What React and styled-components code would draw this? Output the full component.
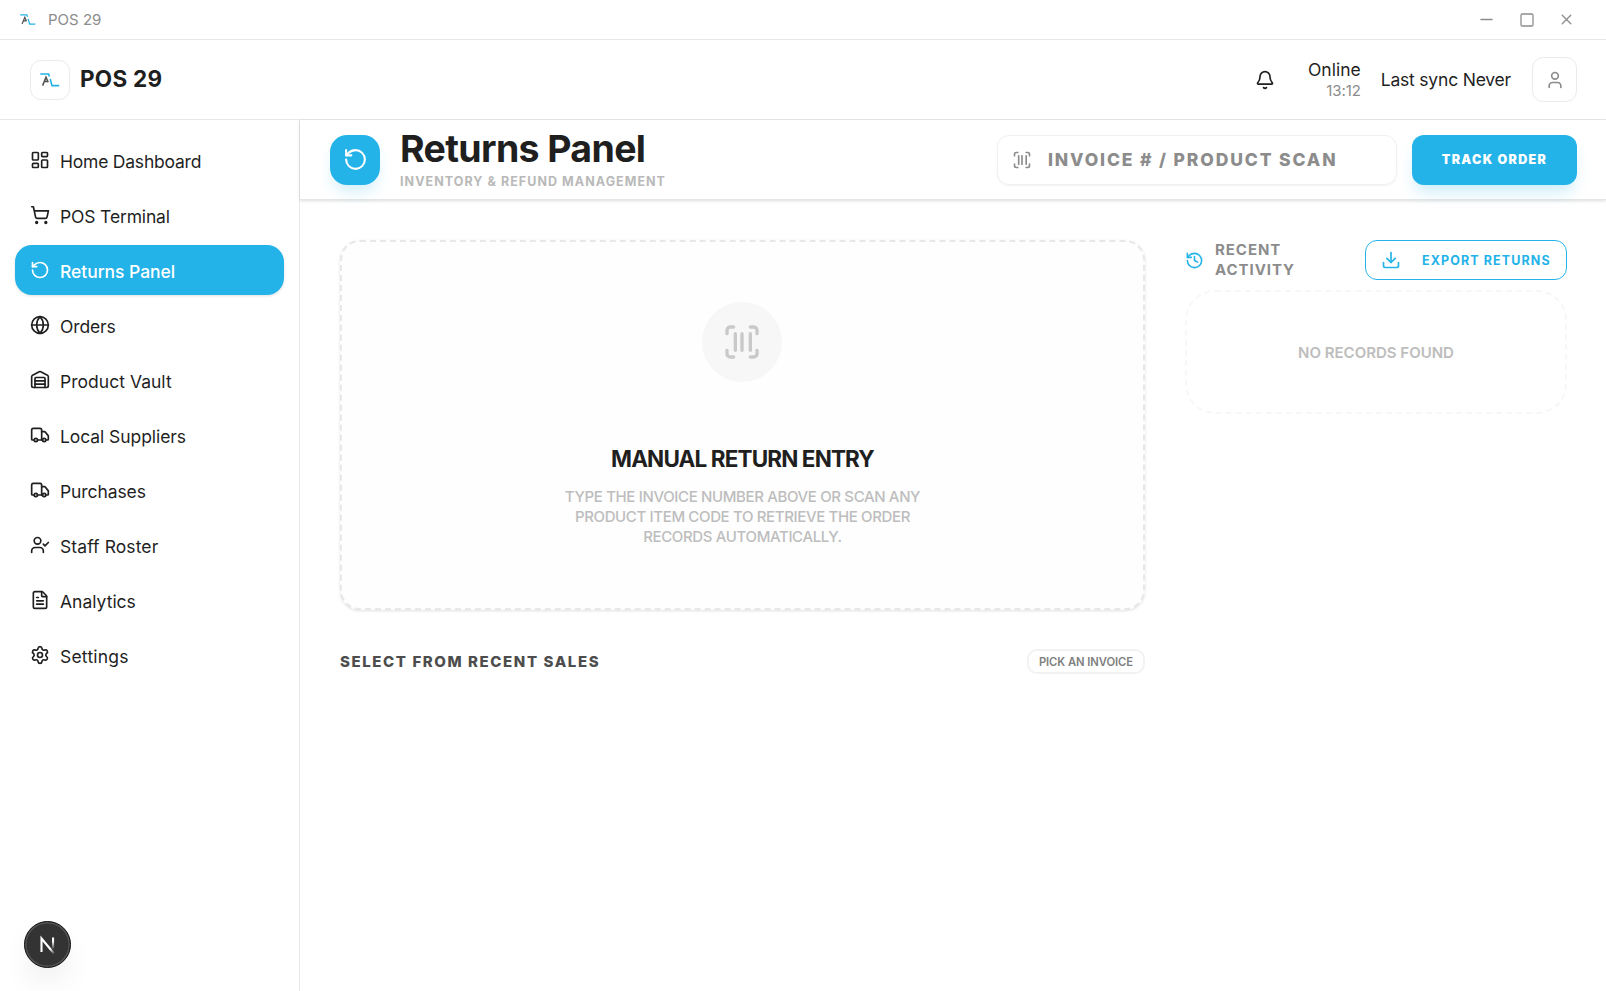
import styled, { createGlobalStyle } from 'styled-components';
import {
  Bell,
  Download,
  FileText,
  Globe,
  History,
  LayoutDashboard,
  Minus,
  RotateCcw,
  ScanBarcode,
  Settings,
  ShoppingCart,
  Square,
  Truck,
  User,
  UserCheck,
  Warehouse,
  X,
} from 'lucide-react';

const GlobalStyle = createGlobalStyle`
  * {
    box-sizing: border-box;
  }
  body {
    margin: 0;
    background: #fff;
    color: #1f1f1f;
    font-family: Inter, 'Liberation Sans', sans-serif;
    overflow: hidden;
  }
  h1, h2, h3, p {
    margin: 0;
  }
  svg {
    display: block;
    flex-shrink: 0;
  }
`;
const Window = styled.div`
  display: flex;
  flex-direction: column;
  height: 100vh;
`;
const TitleBar = styled.div`
  display: flex;
  align-items: center;
  flex: 0 0 40px;
  padding: 0 31px 0 20px;
  border-bottom: 1px solid #e8e8e8;
  color: #8c8c8c;
`;
const WindowTitle = styled.span`
  margin-left: 12px;
  font-size: 15px;
`;
const WindowButtons = styled.div`
  display: flex;
  align-items: center;
  gap: 23px;
  margin-left: auto;
`;
const Header = styled.header`
  display: flex;
  align-items: center;
  flex: 0 0 80px;
  padding: 0 29px 0 30px;
  border-bottom: 1px solid #e8e8e8;
`;
const IconBox = styled.div`
  display: flex;
  justify-content: center;
  align-items: center;
  width: ${props => props.$size}px;
  height: ${props => props.$size}px;
  border: 1px solid #ebebeb;
  border-radius: 11px;
  color: #8c8c8c;
`;
const Brand = styled.h2`
  margin-left: 10px;
  padding-bottom: 2px;
  font-size: 22.5px;
  font-weight: 700;
  letter-spacing: 0.25px;
`;
const HeaderRight = styled.div`
  display: flex;
  align-items: center;
  margin-left: auto;
`;
const Status = styled.div`
  margin: 0 20px 0 33px;
  text-align: right;
  font-size: 17.5px;
  line-height: 22px;
  p {
    color: #8c8c8c;
    font-size: 15px;
    line-height: 20px;
    letter-spacing: -0.1px;
  }
`;
const Sync = styled.span`
  margin-right: 21px;
  font-size: 17.5px;
  letter-spacing: -0.2px;
`;
const Body = styled.div`
  display: flex;
  flex: 1;
  min-height: 0;
`;
const Sidebar = styled.nav`
  display: flex;
  flex-direction: column;
  gap: 5px;
  flex: 0 0 300px;
  padding: 15px 15px 23px;
  border-right: 1px solid #e8e8e8;
`;
const NavItem = styled.div`
  display: flex;
  align-items: center;
  gap: 10px;
  height: 50px;
  padding: 0 15px;
  border-radius: 17px;
  font-size: 17.5px;
  letter-spacing: ${props => props.$spacing || 0}px;
  color: ${props => (props.$active ? '#fff' : '#1f1f1f')};
  background: ${props => (props.$active ? '#24b3e8' : 'transparent')};
  box-shadow: ${props =>
    props.$active ? '0 1px 3px rgba(0, 0, 0, 0.12)' : 'none'};
  font-weight: ${props => (props.$active ? 500 : 400)};
  span {
    padding-top: 2px;
  }
`;
const DevBadge = styled.div`
  display: flex;
  justify-content: center;
  align-items: center;
  width: 47px;
  height: 47px;
  margin: auto 0 0 9px;
  border: 1px solid #111;
  border-radius: 50%;
  background: #333;
  box-shadow:
    inset 0 0 0 1.5px #545454,
    0 16px 32px -8px rgba(0, 0, 0, 0.12);
`;
const Main = styled.main`
  flex: 1;
  min-width: 0;
`;
const PageHeader = styled.div`
  display: flex;
  align-items: center;
  height: 80px;
  padding: 0 29px 0 30px;
  border-bottom: 1px solid #e5e5e5;
  box-shadow: 0 1px 3px rgba(0, 0, 0, 0.14);
`;
const PageIcon = styled.div`
  display: flex;
  justify-content: center;
  align-items: center;
  width: 50px;
  height: 50px;
  border-radius: 17px;
  color: #fff;
  background: #24b3e8;
  box-shadow: 0 10px 16px -4px rgba(36, 179, 232, 0.22);
`;
const PageTitle = styled.div`
  margin-left: 20px;
  padding-top: 1px;
  h1 {
    font-size: 37.5px;
    line-height: 38px;
    font-weight: 700;
    letter-spacing: -0.65px;
  }
  p {
    margin-top: 5px;
    color: #b9b9b9;
    font-size: 12.5px;
    line-height: 18px;
    font-weight: 700;
    letter-spacing: 1.05px;
  }
`;
const SearchBox = styled.div`
  display: flex;
  align-items: center;
  gap: 16px;
  width: 400px;
  height: 50px;
  margin-left: auto;
  padding: 0 14px;
  border: 1px solid #f0f0f0;
  border-radius: 12px;
  box-shadow: 0 1px 2px rgba(0, 0, 0, 0.05);
  color: #8c8c8c;
  font-size: 17.5px;
  font-weight: 800;
  letter-spacing: 1.86px;
  white-space: nowrap;
`;
const TrackButton = styled.button`
  width: 165px;
  height: 50px;
  margin-left: 15px;
  padding: 0;
  border: 0;
  border-radius: 12px;
  background: #24b3e8;
  box-shadow: 0 10px 16px -4px rgba(36, 179, 232, 0.25);
  color: #fff;
  font-family: inherit;
  font-size: 12.5px;
  font-weight: 900;
  letter-spacing: 1.35px;
`;
const Content = styled.div`
  display: grid;
  grid-template-columns: 805px 382px;
  gap: 40px;
  padding: 40px;
`;
const EntryCard = styled.section`
  display: flex;
  flex-direction: column;
  align-items: center;
  height: 370px;
  padding-top: 60px;
  border: 2px dashed #e8e8e8;
  border-radius: 20px;
  background: #fefefe;
  box-shadow: 0 1px 3px rgba(0, 0, 0, 0.12);
  h3 {
    margin-top: 62px;
    font-size: 22.5px;
    line-height: 30px;
    font-weight: 700;
    letter-spacing: -0.87px;
  }
  p {
    width: 400px;
    margin-top: 13px;
    text-align: center;
    color: #bdbdbd;
    font-size: 15px;
    line-height: 20px;
    font-weight: 500;
    letter-spacing: -0.36px;
  }
`;
const Circle = styled.div`
  display: flex;
  justify-content: center;
  align-items: center;
  width: 80px;
  height: 80px;
  margin-right: 1px;
  border-radius: 50%;
  background: #f7f7f7;
  color: #c9c9c9;
`;
const SalesRow = styled.div`
  display: flex;
  align-items: center;
  justify-content: space-between;
  margin-top: 39px;
  color: #4d4d4d;
  font-size: 15px;
  font-weight: 800;
  letter-spacing: 1.59px;
`;
const Pill = styled.span`
  display: flex;
  justify-content: center;
  align-items: center;
  width: 118px;
  height: 25px;
  border: 2px solid #f2f2f2;
  border-radius: 10px;
  color: #808080;
  font-size: 11.25px;
  font-weight: 600;
  letter-spacing: -0.07px;
`;
const ActivityHead = styled.div`
  display: flex;
  align-items: center;
  height: 40px;
  svg {
    color: #24b3e8;
  }
  h3 {
    width: 110px;
    margin-left: 11px;
    color: #8c8c8c;
    font-size: 15px;
    line-height: 20px;
    font-weight: 700;
    letter-spacing: ${props => props.$spacing}px;
  }
`;
const ExportButton = styled.button`
  display: flex;
  align-items: center;
  gap: 21px;
  width: 202px;
  height: 40px;
  margin-left: auto;
  padding: 0 0 0 15px;
  border: 1px solid #24b3e8;
  border-radius: 12px;
  background: #fff;
  color: #24b3e8;
  font-family: inherit;
  font-size: 12.5px;
  font-weight: 700;
  letter-spacing: 1.1px;
  white-space: nowrap;
`;
const EmptyBox = styled.div`
  display: flex;
  justify-content: center;
  align-items: center;
  height: 124px;
  margin-top: 10px;
  border: 2px dashed #f7f7f7;
  border-radius: 30px;
  color: #bdbdbd;
  font-size: 15px;
  font-weight: 600;
`;

const navItems = [
  { label: 'Home Dashboard', icon: LayoutDashboard, spacing: -0.22 },
  { label: 'POS Terminal', icon: ShoppingCart, spacing: -0.15 },
  { label: 'Returns Panel', icon: RotateCcw, active: true, spacing: -0.05 },
  { label: 'Orders', icon: Globe, spacing: -0.15 },
  { label: 'Product Vault', icon: Warehouse, spacing: 0.03 },
  { label: 'Local Suppliers', icon: Truck, spacing: -0.07 },
  { label: 'Purchases', icon: Truck, spacing: -0.1 },
  { label: 'Staff Roster', icon: UserCheck, spacing: 0.1 },
  { label: 'Analytics', icon: FileText },
  { label: 'Settings', icon: Settings, spacing: 0.22 },
];

function Logo({ width }) {
  return (
    <svg width={width} height={width * 0.7} viewBox="0 0 20 14" fill="none">
      <path d="M0.3 1H8.6L9.4 3.6M10.2 6L12 12.6H19.2" stroke="#24b3e8" strokeWidth="1.6" />
      <path d="M2.6 12.6L6 4.2L8.2 9.2M4.6 8.6H8" stroke="#505050" strokeWidth="1.5" />
    </svg>
  );
}

function App() {
  return (
    <>
      <GlobalStyle />
      <Window>
        <TitleBar>
          <Logo width={16} />
          <WindowTitle>POS 29</WindowTitle>
          <WindowButtons>
            <Minus size={19} strokeWidth={1.8} />
            <Square size={16} strokeWidth={1.9} />
            <X size={17} strokeWidth={1.9} />
          </WindowButtons>
        </TitleBar>
        <Header>
          <IconBox $size={40}>
            <Logo width={20} />
          </IconBox>
          <Brand>POS 29</Brand>
          <HeaderRight>
            <Bell size={20} />
            <Status>
              Online
              <p>13:12</p>
            </Status>
            <Sync>Last sync Never</Sync>
            <IconBox $size={45}>
              <User size={20} />
            </IconBox>
          </HeaderRight>
        </Header>
        <Body>
          <Sidebar>
            {navItems.map(({ label, icon: Icon, active, spacing }) => (
              <NavItem key={label} $active={active} $spacing={spacing}>
                <Icon size={20} />
                <span>{label}</span>
              </NavItem>
            ))}
            <DevBadge>
              <svg width="20" height="20" viewBox="0 0 20 20" fill="none">
                <defs>
                  <linearGradient id="fade" x1="0" y1="0" x2="0" y2="1">
                    <stop offset="0.3" stopColor="#fff" />
                    <stop offset="1" stopColor="#fff" stopOpacity="0" />
                  </linearGradient>
                  <linearGradient id="tail" x1="0" y1="0" x2="1" y2="1">
                    <stop offset="0.7" stopColor="#fff" />
                    <stop offset="1" stopColor="#fff" stopOpacity="0.1" />
                  </linearGradient>
                </defs>
                <path d="M3.5 17V3.5L16 18.5" stroke="url(#tail)" strokeWidth="2.1" />
                <rect x="14" y="2.5" width="2.1" height="12" fill="url(#fade)" />
              </svg>
            </DevBadge>
          </Sidebar>
          <Main>
            <PageHeader>
              <PageIcon>
                <RotateCcw size={25} />
              </PageIcon>
              <PageTitle>
                <h1>Returns Panel</h1>
                <p>INVENTORY &amp; REFUND MANAGEMENT</p>
              </PageTitle>
              <SearchBox>
                <ScanBarcode size={20} />
                INVOICE # / PRODUCT SCAN
              </SearchBox>
              <TrackButton>TRACK ORDER</TrackButton>
            </PageHeader>
            <Content>
              <div>
                <EntryCard>
                  <Circle>
                    <ScanBarcode size={40} />
                  </Circle>
                  <h3>MANUAL RETURN ENTRY</h3>
                  <p>
                    TYPE THE INVOICE NUMBER ABOVE OR SCAN ANY
                    <br />
                    PRODUCT ITEM CODE TO RETRIEVE THE ORDER
                    <br />
                    RECORDS AUTOMATICALLY.
                  </p>
                </EntryCard>
                <SalesRow>
                  SELECT FROM RECENT SALES
                  <Pill>PICK AN INVOICE</Pill>
                </SalesRow>
              </div>
              <aside>
                <ActivityHead $spacing={0.95}>
                  <History size={19} />
                  <h3>RECENT ACTIVITY</h3>
                  <ExportButton>
                    <Download size={20} />
                    EXPORT RETURNS
                  </ExportButton>
                </ActivityHead>
                <EmptyBox>NO RECORDS FOUND</EmptyBox>
              </aside>
            </Content>
          </Main>
        </Body>
      </Window>
    </>
  );
}

export default App;
